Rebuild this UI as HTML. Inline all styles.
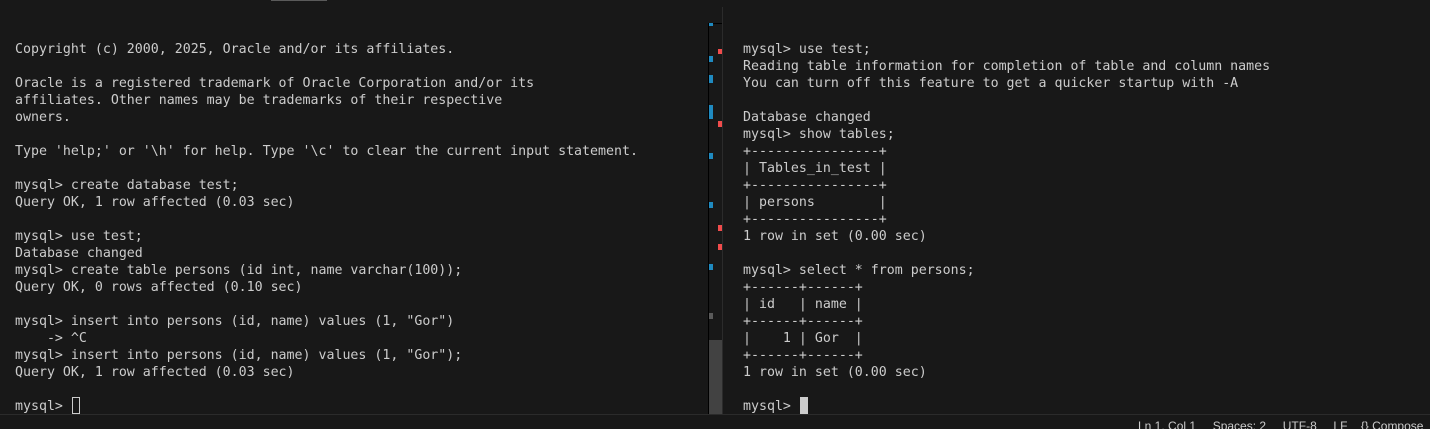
<!DOCTYPE html>
<html><head><style>
body{margin:0;width:1430px;height:428px;background:#181818;overflow:hidden;position:relative;font-family:"DejaVu Sans Mono","Liberation Mono",monospace;}
pre{margin:0;position:absolute;font-family:"DejaVu Sans Mono",monospace;font-size:13.28px;line-height:17px;color:#cccccc;}
.m{position:absolute;}
</style></head><body>
<div class="m" style="left:271px;top:0;width:56px;height:1px;background:#5a5a5a"></div>
<pre style="left:15px;top:41px">Copyright (c) 2000, 2025, Oracle and/or its affiliates.

Oracle is a registered trademark of Oracle Corporation and/or its
affiliates. Other names may be trademarks of their respective
owners.

Type 'help;' or '\h' for help. Type '\c' to clear the current input statement.

mysql> create database test;
Query OK, 1 row affected (0.03 sec)

mysql> use test;
Database changed
mysql> create table persons (id int, name varchar(100));
Query OK, 0 rows affected (0.10 sec)

mysql> insert into persons (id, name) values (1, "Gor")
    -> ^C
mysql> insert into persons (id, name) values (1, "Gor");
Query OK, 1 row affected (0.03 sec)

mysql> </pre>
<div class="m" style="left:72px;top:397px;width:6px;height:15px;border:1px solid #cccccc"></div>
<pre style="left:743px;top:41px">mysql> use test;
Reading table information for completion of table and column names
You can turn off this feature to get a quicker startup with -A

Database changed
mysql> show tables;
+----------------+
| Tables_in_test |
+----------------+
| persons        |
+----------------+
1 row in set (0.00 sec)

mysql> select * from persons;
+------+------+
| id   | name |
+------+------+
|    1 | Gor  |
+------+------+
1 row in set (0.00 sec)

mysql> </pre>
<div class="m" style="left:800px;top:397px;width:8px;height:17px;background:#cccccc"></div>
<div class="m" style="left:708px;top:23px;width:1px;height:391px;background:#000"></div>
<div class="m" style="left:708px;top:23px;width:14px;height:1px;background:#000"></div>
<div class="m" style="left:722px;top:7px;width:1px;height:407px;background:#2b2b2b"></div>
<div class="m" style="left:709px;top:340px;width:13px;height:74px;background:#424242"></div>
<div class="m" style="left:709px;top:23px;width:4px;height:3px;background:#1f8ac0"></div>
<div class="m" style="left:709px;top:56px;width:4px;height:6px;background:#1f8ac0"></div>
<div class="m" style="left:709px;top:75px;width:4px;height:8px;background:#1f8ac0"></div>
<div class="m" style="left:709px;top:105px;width:4px;height:14px;background:#1f8ac0"></div>
<div class="m" style="left:709px;top:153px;width:4px;height:6px;background:#1f8ac0"></div>
<div class="m" style="left:709px;top:202px;width:4px;height:6px;background:#1f8ac0"></div>
<div class="m" style="left:709px;top:264px;width:4px;height:6px;background:#1f8ac0"></div>
<div class="m" style="left:709px;top:313px;width:4px;height:6px;background:#5a5a5a"></div>
<div class="m" style="left:718px;top:49px;width:4px;height:5px;background:#f14c4c"></div>
<div class="m" style="left:718px;top:121px;width:4px;height:6px;background:#f14c4c"></div>
<div class="m" style="left:718px;top:225px;width:4px;height:6px;background:#f14c4c"></div>
<div class="m" style="left:718px;top:244px;width:4px;height:6px;background:#f14c4c"></div>
<div class="m" style="left:0;top:414px;width:1430px;height:14px;background:#181818;border-top:1px solid #2b2b2b;overflow:hidden">
<div class="m" style="left:1138px;top:3px;font-family:'Liberation Sans',sans-serif;font-size:12px;color:#cccccc;white-space:nowrap;line-height:16px">Ln 1, Col 1&nbsp;&nbsp;&nbsp;&nbsp; Spaces: 2&nbsp;&nbsp;&nbsp;&nbsp; UTF-8&nbsp;&nbsp;&nbsp;&nbsp; LF&nbsp;&nbsp;&nbsp; {} Compose</div></div>
</body></html>
